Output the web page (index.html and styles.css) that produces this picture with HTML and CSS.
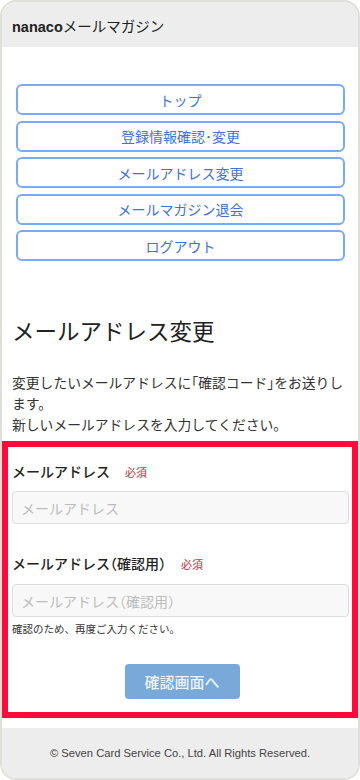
FILE: index.html
```html
<!DOCTYPE html>
<html lang="ja">
<head>
    <meta charset="UTF-8">
    <meta name="viewport" content="width=device-width, initial-scale=1.0">
    <title>nanacoメールマガジン</title>
    <link rel="stylesheet" href="styles.css">
</head>
<body>

    <div class="frame">
        <header class="site-header">
            <b>nanaco</b>メールマガジン
        </header>

        <!-- メニュー -->
        <nav class="menu">
            <a href="#">トップ</a>
            <a href="#">登録情報確認･変更</a>
            <a href="#">メールアドレス変更</a>
            <a href="#">メールマガジン退会</a>
            <a href="#">ログアウト</a>
        </nav>

        <main class="content">
            <h1>メールアドレス変更</h1>
            <p class="lead">変更したいメールアドレスに「確認コード」をお送りします。<br>新しいメールアドレスを入力してください。</p>
        </main>

        <form class="form-box">
            <label class="field-label">メールアドレス<span class="req">必須</span></label>
            <input type="text" class="field" placeholder="メールアドレス">

            <label class="field-label second">メールアドレス（確認用）<span class="req">必須</span></label>
            <input type="text" class="field field-confirm" placeholder="メールアドレス（確認用）">
            <p class="note">確認のため、再度ご入力ください。</p>

            <div class="actions">
                <button type="button" class="submit">確認画面へ</button>
            </div>
        </form>

        <footer class="footer">
            &copy; Seven Card Service Co., Ltd. All Rights Reserved.
        </footer>
    </div>

</body>
</html>
```

FILE: styles.css
```css
* {
    margin: 0;
    padding: 0;
    box-sizing: border-box;
}

body {
    font-family: "Noto Sans CJK JP", "Noto Sans", sans-serif;
    color: #333;
    background: #fff;
}

.frame {
    width: 360px;
    height: 780px;
    border: 2px solid #e0e0da;
    border-radius: 16px;
    overflow: hidden;
    display: flex;
    flex-direction: column;
    background: #fff;
}

/* ヘッダー */
.site-header {
    height: 45px;
    line-height: 47px;
    padding-left: 10px;
    background: #ededed;
    font-size: 14.5px;
    color: #222;
}

.site-header b {
    font-family: "Liberation Sans", Arial, sans-serif;
    font-weight: bold;
}

/* メニュー */
.menu {
    display: flex;
    flex-direction: column;
    gap: 5.5px;
    margin-top: 37px;
    padding: 0 13px 0 14px;
}

.menu a {
    display: flex;
    justify-content: center;
    align-items: center;
    height: 31px;
    border: 2px solid #7aabf2;
    border-radius: 6px;
    color: #3e72d6;
    font-size: 14px;
    text-decoration: none;
}

.content {
    padding: 0 8px 0 10px;
}

.content h1 {
    margin-top: 52px;
    font-size: 22.5px;
    line-height: 34px;
    font-weight: 400;
    color: #222;
}

.lead {
    margin-top: 25px;
    font-size: 13.8px;
    line-height: 21px;
    color: #333;
    font-feature-settings: "halt";
}

/* 入力フォーム */
.form-box {
    margin-top: 6px;
    border: 6px solid #ff0a3c;
    padding: 14px 3px 0 4px;
    height: 277px;
}

.field-label {
    display: block;
    font-size: 14px;
    line-height: 20px;
    font-weight: 500;
    color: #222;
    font-feature-settings: "halt";
}

.field-label.second {
    margin-top: 29px;
}

.req {
    margin-left: 15px;
    font-size: 11px;
    font-weight: normal;
    color: #c4303a;
}

.field {
    display: block;
    width: 100%;
    height: 33px;
    margin-top: 9px;
    padding: 0 8px;
    border: 1px solid #dcdcdc;
    border-radius: 4px;
    background: #f8f8f8;
    font-family: inherit;
    font-size: 14px;
    color: #333;
    font-feature-settings: "halt";
}

.field-confirm {
    margin-top: 10px;
}

.field::placeholder {
    color: #bdbdbd;
}

.note {
    margin-top: 4px;
    font-size: 10.5px;
    line-height: 16px;
    color: #333;
}

.actions {
    display: flex;
    justify-content: center;
    margin-top: 27px;
    padding-left: 3px;
}

.submit {
    width: 115px;
    height: 35px;
    border: none;
    border-radius: 4px;
    background: #79a9d8;
    color: #eef4fb;
    font-family: inherit;
    font-size: 15px;
    font-weight: 500;
}

/* フッター */
.footer {
    margin-top: auto;
    height: 50px;
    display: flex;
    justify-content: center;
    align-items: center;
    background: #ededed;
    font-family: "Liberation Sans", Arial, sans-serif;
    font-size: 11.2px;
    color: #444;
}
```
